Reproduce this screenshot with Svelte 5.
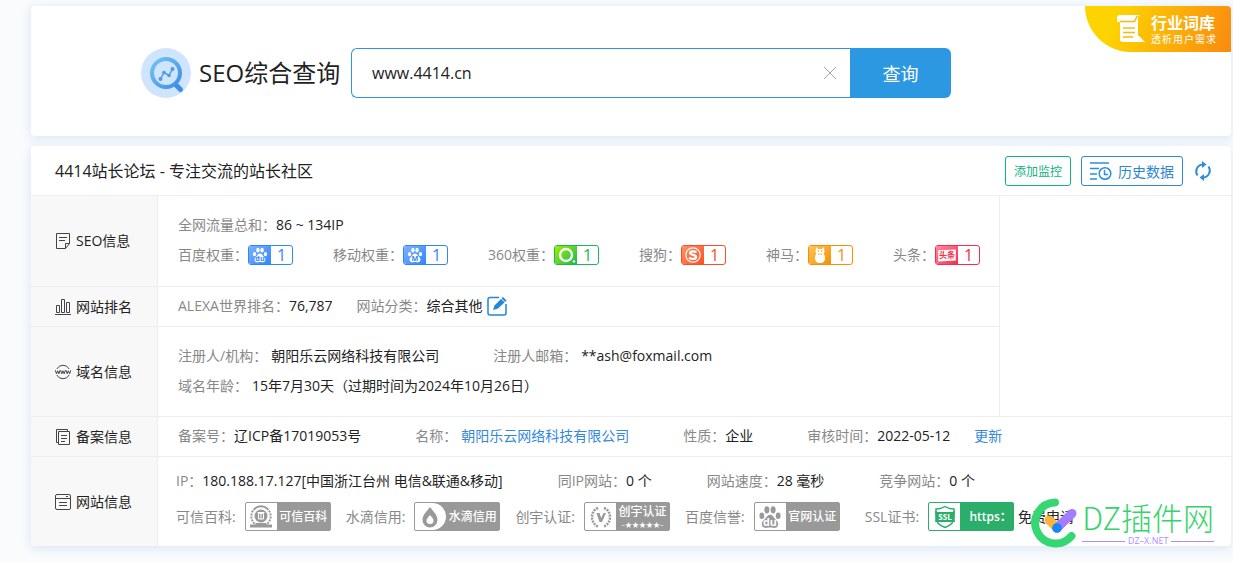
<script>
  let domain = $state('www.4414.cn');

  const weights = [
    { label: '百度权重：', kind: 'baidu', value: 1 },
    { label: '移动权重：', kind: 'mobile', value: 1 },
    { label: '360权重：', kind: 'so', value: 1 },
    { label: '搜狗：', kind: 'sogou', value: 1 },
    { label: '神马：', kind: 'shenma', value: 1 },
    { label: '头条：', kind: 'toutiao', value: 1 },
  ];

  const site = [
    { label: 'IP：', value: '180.188.17.127[中国浙江台州 电信&联通&移动]' },
    { label: '同IP网站：', value: '0 个' },
    { label: '网站速度：', value: '28 毫秒' },
    { label: '竞争网站：', value: '0 个' },
  ];

  const trust = [
    { label: '可信百科:', kind: 'baike', text: '可信百科' },
    { label: '水滴信用:', kind: 'drop', text: '水滴信用' },
    { label: '创宇认证:', kind: 'chuangyu', text: '创宇认证' },
    { label: '百度信誉:', kind: 'paw', text: '官网认证' },
  ];
</script>

{#snippet paw(letters)}
  <ellipse cx="3.2" cy="9" rx="2" ry="2.7" />
  <ellipse cx="7.4" cy="4" rx="2.1" ry="3" />
  <ellipse cx="12.6" cy="4" rx="2.1" ry="3" />
  <ellipse cx="16.8" cy="9" rx="2" ry="2.7" />
  <path d="M10 8.2c2.2 0 2.9 2 4.2 3.4 1.6 1.6 3 2.7 2.5 5-.5 2.5-2.9 2.700-4.400 2.400-1.500-.3-3.100-.3-4.600 0-1.500.3-3.900.1-4.400-2.400-.5-2.300.9-3.400 2.500-5 1.300-1.400 2-3.400 4.200-3.400z" />
  <text class="paw-text" x="10" y="17.5" text-anchor="middle">{letters}</text>
{/snippet}

<main>
  <section class="card search-card">
    <form class="search" onsubmit={(e) => e.preventDefault()}>
      <label class="title" for="domain">
        <svg class="logo" viewBox="0 0 50 50" aria-hidden="true">
          <defs>
            <linearGradient id="lens" x1="0" y1="0" x2="1" y2="1">
              <stop offset="0" stop-color="#74c3f4" />
              <stop offset="1" stop-color="#3d8ee8" />
            </linearGradient>
          </defs>
          <circle cx="25" cy="25" r="25" fill="#cfe5fe" />
          <path d="M35 37l4.500 4.500" stroke="#3f8fe9" stroke-width="5" stroke-linecap="round" />
          <circle cx="25" cy="25" r="14" fill="none" stroke="url(#lens)" stroke-width="4" />
          <path d="M19.500 31l3.500-6.500 5 3 3.500-6.500" fill="none" stroke="#4c9bec" stroke-width="1.5" />
          <g fill="#4c9bec">
            <circle cx="19.5" cy="31" r="2" />
            <circle cx="23" cy="24.5" r="1.8" />
            <circle cx="28" cy="27.5" r="1.8" />
            <circle cx="31.5" cy="21" r="2" />
          </g>
        </svg>
        <span>SEO综合查询</span>
      </label>
      <div class="field">
        <input id="domain" type="text" bind:value={domain} />
        <button class="clear" type="button" aria-label="清空" onclick={() => (domain = '')}>
          <svg viewBox="0 0 12 12"><path d="M0 0l12 12M12 0L0 12" stroke="#a5a5a5" /></svg>
        </button>
      </div>
      <button class="submit" type="submit">查询</button>
    </form>

    <a class="words" href="#words">
      <svg viewBox="0 0 28 28" aria-hidden="true">
        <path fill="#fff" d="M3 0h20c-2 1-2 3-2 6v14l7 7H6c-2 0-3-1-3-3V7H0V3c0-2 1-3 3-3z" />
        <path d="M3 6.500h14c2 0 1-4 4-5.500M6 13h12M6 17.500h12M6 22h10" fill="none" stroke="#fbb80c" stroke-width="1.5" />
      </svg>
      <span>
        <strong>行业词库</strong>
        <small>透析用户需求</small>
      </span>
    </a>
  </section>

  <section class="card info">
    <header>
      <h1>4414站长论坛 - 专注交流的站长社区</h1>
      <button class="outline green" type="button">添加监控</button>
      <button class="outline blue" type="button">
        <svg viewBox="0 0 22 18" fill="none" stroke="#2b8fdb" stroke-width="1.5" aria-hidden="true">
          <path d="M0 1h19M0 6.500h9M0 12h7M0 17h7" />
          <circle cx="15" cy="11.500" r="5.800" />
          <path d="M14.500 8v4.500h3.500" />
        </svg>
        历史数据
      </button>
      <button class="refresh" type="button" aria-label="刷新">
        <svg viewBox="0 0 18 20">
          <path d="M3.500 14.500A7 7 0 0 1 8.500 3.500M14.500 5.500A7 7 0 0 1 9.500 16.500" fill="none" stroke="#2b8fdb" stroke-width="2" />
          <path d="M8 0l4.500 3.500L8 7zM10 13l-4.500 3.500L10 20z" fill="#2b8fdb" />
        </svg>
      </button>
    </header>

    <div class="upper">
      <div class="rows">
        <div class="row">
          <h2>
            <svg viewBox="0 0 16 16"><path d="M1.500 .5h13v10l-4 5h-9zM14.500 10.500h-4v5M4 4.500h8M4 7.500h6" /></svg>
            SEO信息
          </h2>
          <div class="body tall">
            <div class="line">
              <span><em>全网流量总和：</em>86 ~ 134IP</span>
            </div>
            <div class="line weights">
              {#each weights as w}
                <span>
                  <em>{w.label}</em>
                  <a class="weight {w.kind}" href="#{w.kind}">
                    <i>
                      <svg viewBox="0 0 20 20" fill="#fff" aria-hidden="true">
                        {#if w.kind === 'baidu'}
                          {@render paw('du')}
                        {:else if w.kind === 'mobile'}
                          {@render paw('M')}
                        {:else if w.kind === 'so'}
                          <circle cx="10" cy="10" r="7.5" fill="none" stroke="#fff" stroke-width="3" />
                          <circle cx="20" cy="18" r="1.5" />
                        {:else if w.kind === 'sogou'}
                          <circle cx="10" cy="10" r="9" fill="none" stroke="#fff" stroke-width="1.5" />
                          <path d="M14.500 6.500c-3-1.500-8-1.500-8 1s7.500 2 7.500 5-6 3-9 1" fill="none" stroke="#fff" stroke-width="3" />
                        {:else if w.kind === 'shenma'}
                          <path d="M5 0l2.500 2.500h5L15 0l.5 6c0 1-.5 2-1 2.500 3 3 3 11.500-4.500 11.500S2.500 11.500 5.500 8.500c-.5-.5-1-1.500-1-2.500z" />
                          <g fill="#fba51f"><circle cx="8" cy="5" r="1" /><circle cx="12" cy="5" r="1" /><path d="M7 8.500h6v1H7z" /></g>
                        {:else}
                          <path d="M-1 4l22-1v14l-22 1z" />
                          <text class="tt-text" x="10" y="14" text-anchor="middle">头条</text>
                        {/if}
                      </svg>
                    </i>
                    <b>{w.value}</b>
                  </a>
                </span>
              {/each}
            </div>
          </div>
        </div>

        <div class="row">
          <h2>
            <svg viewBox="0 0 16 16"><path d="M1.500 6.500h3v7h-3zM6.500 .5h3v13h-3zM11.500 3.500h3v10h-3zM0 15.500h16" /></svg>
            网站排名
          </h2>
          <div class="body">
            <div class="line rank">
              <span><em>ALEXA世界排名：</em>76,787</span>
              <span>
                <em>网站分类：</em>综合其他
                <a class="edit" href="#edit" aria-label="修改分类">
                  <svg viewBox="0 0 20 20">
                    <path d="M12 1.500H3Q1 1.500 1 3.500V17q0 2 2 2h14q2 0 2-2V8" fill="none" stroke="#1f88d8" stroke-width="1.5" />
                    <path d="M6 14l1.500-4.500L16 1l3.500 3.500-8.500 8z" fill="#1f88d8" />
                    <path d="M14 2.500l3.800 3.500" stroke="#fff" />
                  </svg>
                </a>
              </span>
            </div>
          </div>
        </div>

        <div class="row">
          <h2>
            <svg viewBox="0 0 16 16"><path d="M1.800 5a7 7 0 0 1 12.400 0M1.800 11a7 7 0 0 0 12.400 0M.3 6.200l1.200 3.600 1.200-3 1.200 3 1.200-3.600M5.600 6.200l1.200 3.600L8 6.800l1.200 3 1.200-3.600M11 6.200l1.200 3.600 1.200-3 1.200 3 1.200-3.600" /></svg>
            域名信息
          </h2>
          <div class="body tall">
            <div class="line wide">
              <span class="spaced"><em>注册人/机构：</em>朝阳乐云网络科技有限公司</span>
              <span class="spaced"><em>注册人邮箱：</em>**ash@foxmail.com</span>
            </div>
            <div class="line wide">
              <span class="spaced"><em>域名年龄：</em>15年7月30天（过期时间为2024年10月26日）</span>
            </div>
          </div>
        </div>
      </div>
      <aside></aside>
    </div>

    <div class="row">
      <h2>
        <svg viewBox="0 0 16 16"><path d="M3.500 2.500h11v13h-11zM3.500 13.500h-2V.5h11v2M6 6.500h6M6 9.500h6M6 12.500h4" /></svg>
        备案信息
      </h2>
      <div class="body">
        <div class="line wide">
          <span><em>备案号：</em>辽ICP备17019053号</span>
          <span class="spaced"><em>名称：</em><a href="#company">朝阳乐云网络科技有限公司</a></span>
          <span><em>性质：</em>企业</span>
          <span class="rank"><span><em>审核时间：</em>2022-05-12</span><a href="#update">更新</a></span>
        </div>
      </div>
    </div>

    <div class="row">
      <h2>
        <svg viewBox="0 0 16 16"><path d="M.5 2q0-1.500 1.500-1.500h12q1.500 0 1.500 1.500v12q0 1.500-1.500 1.500H2Q.5 15.500.5 14zM.5 4.500h15M4 8.500h8M4 11.500h8M11 2.500h2" /></svg>
        网站信息
      </h2>
      <div class="body tall site">
        <div class="line wide">
          {#each site as s}
            <span><em>{s.label}</em>{s.value}</span>
          {/each}
        </div>
        <div class="line trust">
          {#each trust as t}
            <span>
              <em>{t.label}</em>
              <a class="seal {t.kind}" href="#{t.kind}">
                <i>
                  <svg viewBox="0 0 24 24" fill="#999" aria-hidden="true">
                    {#if t.kind === 'baike'}
                      <circle cx="12" cy="11" r="6.500" />
                      <path d="M6 3.500a10 10 0 0 0 0 15.500M18 3.500a10 10 0 0 1 0 15.500" fill="none" stroke="#999" stroke-width="2" stroke-dasharray="2 1" />
                      <path d="M1 19.500h5l1-1.500h10l1 1.500h5v3H1zM5 3a10 10 0 0 1 14 0l-1 1.500a9 9 0 0 0-12 0z" />
                      <path d="M9.500 8.500h5v5.500h-5zM8.500 7.500h7M12 8v6" fill="none" stroke="#fff" />
                    {:else if t.kind === 'drop'}
                      <path d="M11 2c4 5 7.500 8.500 7.500 13a7.500 7.500 0 0 1-15 0C3.500 10.500 7 7 11 2zm0 8c-2 2.500-3.500 3.500-3.500 5.500a3.500 3.500 0 0 0 7 0c0-2-1.500-3-3.500-5.500z" />
                    {:else if t.kind === 'chuangyu'}
                      <path d="M9 3C1 6 1 18 9 21.500M15 3c8 3 8 15 0 18.500" fill="none" stroke="#999" stroke-width="2.5" stroke-dasharray="2 1" />
                      <path d="M7.500 8h3l1.700 5 2.300-5h2.500l-4 9h-2.500z" />
                    {:else}
                      <g transform="scale(1.2)" class="inverse">{@render paw('du')}</g>
                    {/if}
                  </svg>
                </i>
                <b>
                  {t.text}
                  {#if t.kind === 'chuangyu'}<small>–★★★★★–</small>{/if}
                </b>
              </a>
            </span>
          {/each}
          <span class="ssl">
            <em>SSL证书:</em>
            <a class="seal secure" href="#ssl">
              <i>
                <svg viewBox="0 0 24 24" aria-hidden="true">
                  <path d="M12 1.500c3 2 5.500 2.500 9 2.500v9c0 5-5 8-9 9.500-4-1.500-9-4.500-9-9.500V4c3.500 0 6-.5 9-2.500z" fill="none" stroke="#2bae6a" stroke-width="1.5" />
                  <path d="M2 6l3 1h14l3-1-1 6 1 5H2l1-5z" fill="#2bae6a" />
                  <text class="ssl-text" x="12" y="15" text-anchor="middle">SSL</text>
                </svg>
              </i>
              <b>https：</b>
            </a>
            <a class="apply" href="#apply">免费申请</a>
          </span>
        </div>
      </div>
    </div>

    <div class="watermark">
      <svg viewBox="0 0 48 50" aria-hidden="true">
        <path d="M25 4.500A20.500 20.500 0 1 0 41.500 38" fill="none" stroke="#35d773" stroke-width="8" stroke-linecap="round" />
        <path d="M19 22l8 8" stroke="#fdb53c" stroke-width="9" stroke-linecap="round" />
        <path d="M42 15.500L27 30" stroke="#a37cff" stroke-width="9" stroke-linecap="round" />
        <circle cx="27" cy="30" r="4.800" fill="#1687fb" />
      </svg>
      <div>
        <p>DZ插件网</p>
        <small>DZ–X.NET</small>
      </div>
    </div>
  </section>
</main>

<style>
  :global(body) {
    background: #f9fbfd;
    font: 14px/30px "Open Sans", "Noto Sans CJK SC", sans-serif;
    color: #222;
  }

  main {
    display: flex;
    flex-direction: column;
    gap: 10px;
    padding: 6px 2px 16px 31px;
  }

  a {
    color: #3388dd;
    text-decoration: none;
  }

  button {
    font-family: inherit;
    cursor: pointer;
  }

  svg {
    display: block;
    flex-shrink: 0;
  }

  em,
  i {
    font-style: normal;
  }

  .card {
    position: relative;
    background: #fff;
    border-radius: 4px;
    box-shadow: 0 2px 10px 1px #dce8f4;
  }

  /* search */

  .search-card {
    padding: 42px 280px 38px 110px;
  }

  .search {
    display: flex;
    max-width: 810px;
  }

  .title {
    display: flex;
    align-items: center;
    gap: 8px;
    width: 210px;
    font-size: 24px;
    white-space: nowrap;
  }

  .logo {
    width: 50px;
    height: 50px;
  }

  .field {
    display: flex;
    flex: 1;
    align-items: center;
    height: 50px;
    box-sizing: border-box;
    padding: 0 12px 0 20px;
    border: 1px solid #2d98e0;
    border-right: 0;
    border-radius: 6px 0 0 6px;
  }

  .field input {
    flex: 1;
    min-width: 0;
    padding: 0;
    border: 0;
    outline: 0;
    background: none;
    font: inherit;
    font-size: 16px;
    color: #222;
  }

  .clear {
    padding: 2px;
    border: 0;
    background: none;
  }

  .clear svg {
    width: 12px;
    height: 12px;
  }

  .submit {
    width: 101px;
    border: 0;
    border-radius: 0 6px 6px 0;
    background: #2c98e1;
    color: #fff;
    font-size: 18px;
  }

  .words {
    position: absolute;
    top: 0;
    right: 0;
    display: flex;
    gap: 6px;
    width: 146px;
    height: 46px;
    box-sizing: border-box;
    padding: 9px 0 0 32px;
    border-radius: 0 4px 0 46px;
    background: linear-gradient(110deg, #fdd400 20%, #fa8a10);
    color: #fff;
  }

  .words svg {
    width: 28px;
    height: 28px;
  }

  .words strong,
  .words small {
    display: block;
    white-space: nowrap;
  }

  .words strong {
    font-size: 16px;
    line-height: 16px;
  }

  .words small {
    font-size: 10px;
    line-height: 16px;
    letter-spacing: 1px;
  }

  /* header */

  header {
    display: flex;
    align-items: center;
    gap: 10px;
    height: 49px;
    padding: 0 19px 0 24px;
    border-bottom: 1px solid #eee;
  }

  h1 {
    flex: 1;
    margin: 0;
    font-size: 16px;
    font-weight: normal;
  }

  .outline {
    display: flex;
    align-items: center;
    gap: 6px;
    height: 30px;
    padding: 0 8px;
    border: 1px solid;
    border-radius: 3px;
    background: #fff;
    font-size: 12px;
  }

  .green {
    color: #13b081;
  }

  .blue {
    color: #2f86d2;
    font-size: 14px;
  }

  .outline svg {
    width: 22px;
    height: 18px;
  }

  .refresh {
    padding: 0 0 0 1px;
    border: 0;
    background: none;
  }

  .refresh svg {
    width: 18px;
    height: 20px;
  }

  /* rows */

  .upper {
    display: flex;
    border-bottom: 1px solid #eee;
  }

  .rows {
    flex: 1;
  }

  aside {
    width: 231px;
    border-left: 1px solid #eee;
  }

  .row {
    display: flex;
  }

  .row + .row {
    border-top: 1px solid #eee;
  }

  h2 {
    display: flex;
    align-items: center;
    gap: 5px;
    width: 127px;
    box-sizing: border-box;
    margin: 0;
    padding-left: 24px;
    border-right: 1px solid #eee;
    background: #f8f8f8;
    font-size: 14px;
    font-weight: normal;
    white-space: nowrap;
  }

  h2 svg {
    width: 16px;
    height: 16px;
    fill: none;
    stroke: #444;
  }

  .body {
    display: flex;
    flex-direction: column;
    justify-content: center;
    box-sizing: border-box;
    min-height: 39px;
    padding: 0 0 2px 20px;
  }

  .tall {
    min-height: 89px;
  }

  .rows .tall:first-child,
  .rows .row:first-child .tall {
    min-height: 90px;
  }

  .site {
    gap: 6px;
    padding: 0 0 6px 18px;
  }

  .line,
  .line span {
    display: flex;
    align-items: center;
    white-space: nowrap;
  }

  .line em {
    color: #888;
  }

  .weights {
    gap: 40px;
  }

  .rank,
  .line .rank {
    gap: 24px;
  }

  .wide {
    gap: 54px;
  }

  .site .wide {
    gap: 55px;
  }

  .line .spaced {
    gap: 4px;
  }

  .weight {
    display: flex;
    width: 45px;
    height: 20px;
    box-sizing: border-box;
    overflow: hidden;
    border: 1px solid var(--tone);
    border-radius: 3px;
    color: var(--tone);
    line-height: 18px;
  }

  .weight i {
    display: grid;
    place-items: center;
    width: 22px;
    background: linear-gradient(135deg, var(--pale), var(--tone));
  }

  .weight i svg {
    width: 16px;
    height: 16px;
    overflow: visible;
  }

  .weight b {
    flex: 1;
    text-align: center;
    font-size: 16px;
    font-weight: 500;
  }

  .baidu,
  .mobile {
    --tone: #3385ff;
    --pale: #7db2ff;
  }

  .so {
    --tone: #19b955;
    --pale: #a0f000;
  }

  .sogou {
    --tone: #fd4d22;
    --pale: #fa9468;
  }

  .shenma {
    --tone: #f78e05;
    --pale: #ffc555;
  }

  .toutiao {
    --tone: #f82d4e;
    --pale: #ff8ba0;
  }

  .paw-text {
    font: bold 9px/1 "Open Sans", sans-serif;
    fill: #3385ff;
  }

  .tt-text {
    font: bold 10px/1 "Noto Sans CJK SC", sans-serif;
    fill: #f82d4e;
  }

  .inverse .paw-text {
    fill: #fff;
  }

  .edit {
    margin-left: 4px;
  }

  .edit svg {
    width: 20px;
    height: 20px;
  }

  /* trust seals */

  .trust {
    gap: 15px;
  }

  .line .ssl {
    margin-left: 10px;
  }

  .seal {
    display: flex;
    width: 86px;
    height: 29px;
    box-sizing: border-box;
    margin-left: 9px;
    overflow: hidden;
    border: 1px solid #999;
    border-radius: 2px;
    background: #999;
    color: #fff;
  }

  .seal i {
    display: grid;
    place-items: center;
    width: 31px;
    background: #fff;
  }

  .seal i svg {
    width: 24px;
    height: 24px;
  }

  .drop i {
    border-radius: 0 16px 16px 0;
  }

  .seal b {
    display: flex;
    flex: 1;
    flex-direction: column;
    justify-content: center;
    text-align: center;
    font-size: 12px;
    font-weight: 500;
    line-height: 16px;
  }

  .seal small {
    font-size: 7px;
    line-height: 9px;
  }

  .secure {
    border-color: #2bae6a;
    background: #2bae6a;
  }

  .secure b {
    padding-left: 8px;
    font-weight: 600;
  }

  .ssl-text {
    font: bold 8px/1 "Open Sans", sans-serif;
    fill: #fff;
  }

  .apply {
    margin-left: 4px;
    color: #222;
  }

  .watermark {
    position: absolute;
    right: 17px;
    bottom: -2px;
    display: flex;
    gap: 4px;
    color: #35d46b;
  }

  .watermark svg {
    width: 48px;
    height: 50px;
  }

  .watermark p {
    margin: 0;
    font: 300 31px/38px "Noto Sans CJK SC", sans-serif;
  }

  .watermark small {
    display: flex;
    align-items: center;
    gap: 3px;
    color: #b08eff;
    font-size: 9px;
    line-height: 10px;
  }

  .watermark small::before,
  .watermark small::after {
    content: "";
    flex: 1;
    height: 1px;
    background: #b08eff;
  }
</style>
